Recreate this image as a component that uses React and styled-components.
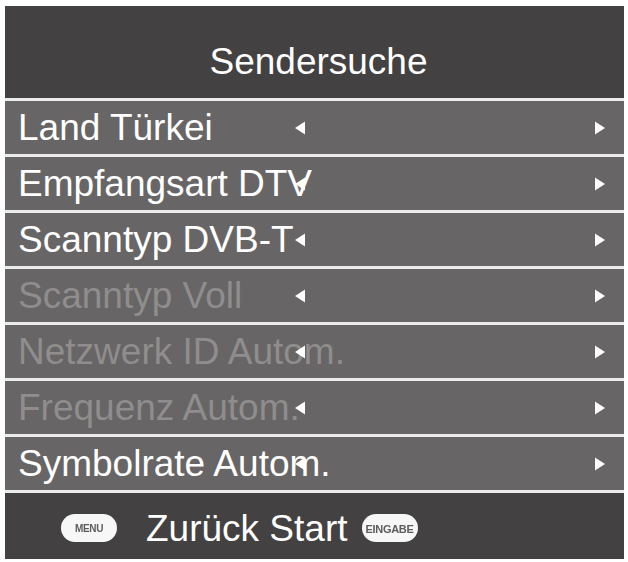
import React from 'react'
import styled, { createGlobalStyle } from 'styled-components'

const GlobalStyle = createGlobalStyle`
  body {
    margin: 0;
    background: #ffffff;
    font-family: "Liberation Sans", Arial, sans-serif;
  }
`;

const Panel = styled.div`
  margin: 6px 0 0 5px;
  width: 619px;
  display: flex;
  flex-direction: column;
  gap: 3px;
  background: #ececec;
`;

const Header = styled.div`
  height: 92px;
  box-sizing: border-box;
  padding: 18px 0 0 8px;
  display: flex;
  align-items: center;
  justify-content: center;
  background: #434141;
  color: #ffffff;
  font-size: 37px;
  line-height: 37px;
`;

const Row = styled.div`
  height: 53px;
  box-sizing: border-box;
  padding: 0 18px 0 13px;
  display: grid;
  grid-template-columns: 276px 1fr auto;
  align-items: center;
  background: #676565;
`;

const Label = styled.span`
  grid-row: 1;
  grid-column: 1 / -1;
  font-size: 37px;
  line-height: 37px;
  white-space: nowrap;
  color: ${p => (p.$dim ? '#8f8d8d' : '#ffffff')};
`;

const Arrow = styled.svg`
  grid-row: 1;
  grid-column: ${p => (p.$right ? 3 : 2)};
  width: 12px;
  height: 14px;
  filter: blur(0.4px);
`;

const Footer = styled.div`
  height: 66px;
  box-sizing: border-box;
  padding: 4px 0 0 56px;
  display: flex;
  align-items: center;
  background: #434141;
  color: #ffffff;
  font-size: 37px;
  line-height: 37px;
`;

const Key = styled.span`
  width: 56px;
  height: 28px;
  border-radius: 14px;
  background: #f7f7f7;
  color: #5e5c5c;
  font-size: ${p => p.$size || 10}px;
  font-weight: bold;
  line-height: 30px;
  text-align: center;
  white-space: nowrap;
  letter-spacing: -0.3px;
  filter: blur(0.3px);
  margin: ${p => p.$margin || 0};
`;

const LeftTri = () => (
  <Arrow viewBox="0 0 12 14">
    <polygon points="11,0.5 11,13.5 1,7" fill="#ffffff" />
  </Arrow>
);

const RightTri = () => (
  <Arrow $right viewBox="0 0 12 14">
    <polygon points="1,0.5 1,13.5 11,7" fill="#ffffff" />
  </Arrow>
);

const rows = [
  { text: 'Land Türkei' },
  { text: 'Empfangsart DTV' },
  { text: 'Scanntyp DVB-T' },
  { text: 'Scanntyp Voll', dim: true },
  { text: 'Netzwerk ID Autom.', dim: true },
  { text: 'Frequenz Autom.', dim: true },
  { text: 'Symbolrate Autom.' },
];

const App = () => (
  <>
    <GlobalStyle />
    <Panel>
      <Header>Sendersuche</Header>
      {rows.map(r => (
        <Row key={r.text}>
          <Label $dim={r.dim}>{r.text}</Label>
          <LeftTri />
          <RightTri />
        </Row>
      ))}
      <Footer>
        <Key $margin="0 29px 0 0">MENU</Key>
        Zurück Start
        <Key $size={11} $margin="0 0 0 14px">EINGABE</Key>
      </Footer>
    </Panel>
  </>
)

export default App
